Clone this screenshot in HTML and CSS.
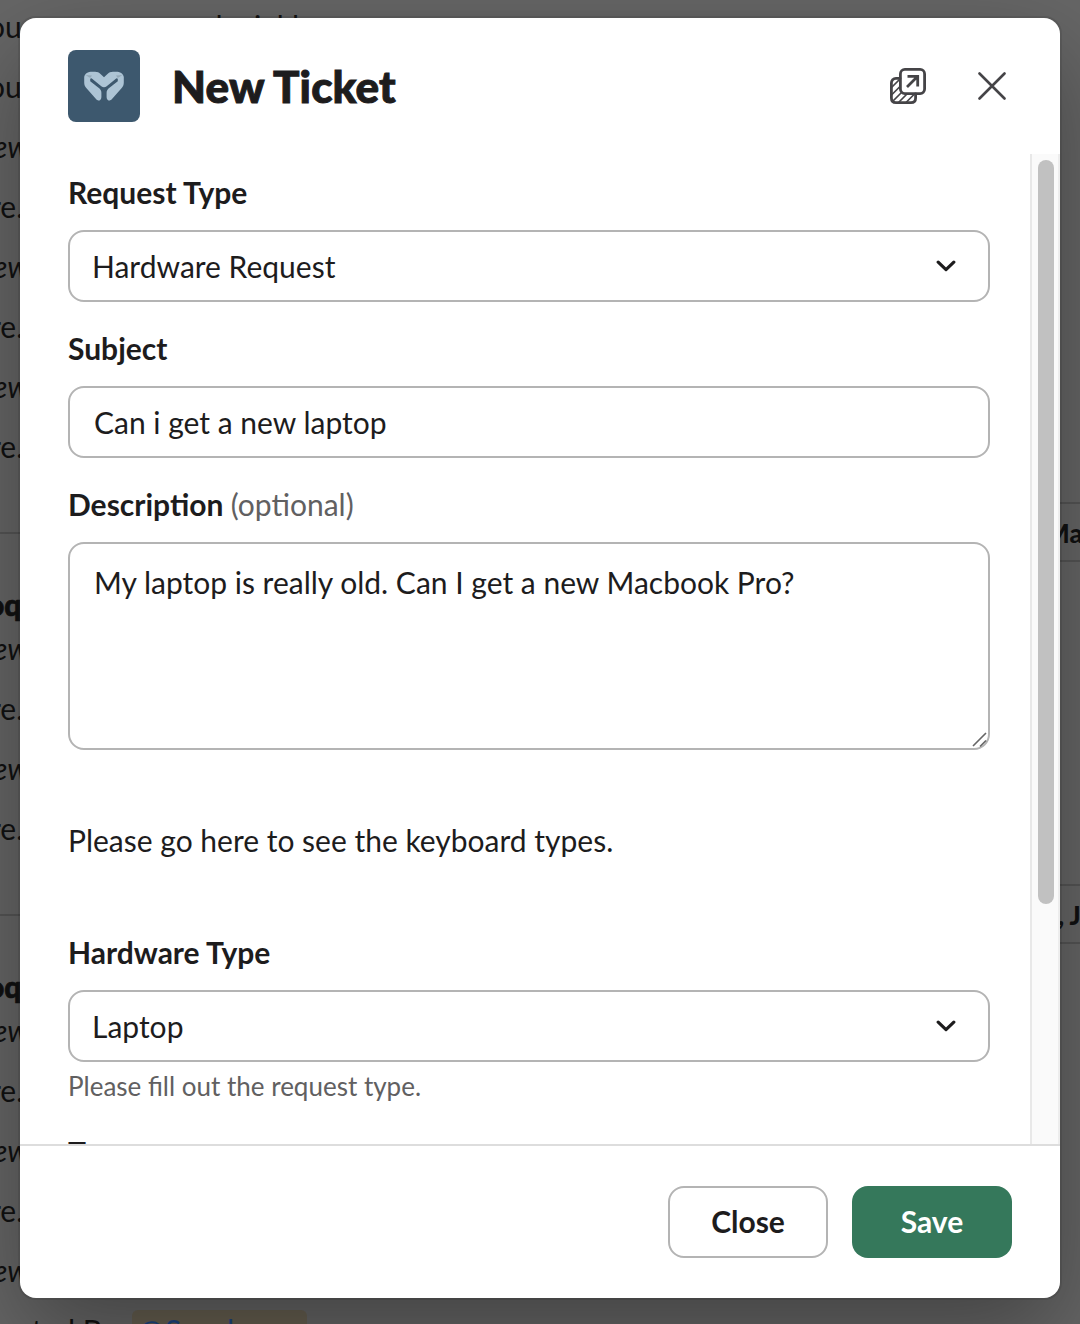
FILE: index.html
```html
<!DOCTYPE html>
<html lang="en">
<head>
    <meta charset="UTF-8">
    <meta name="viewport" content="width=device-width, initial-scale=1">
    <link rel="stylesheet" href="styles.css">
    <title>New Ticket</title>
</head>

<body>
<div class="channel">
    <div class="message">
        <p class="you">ou<span class="rest">d &nbsp;i kl</span></p>
        <p class="you">ou</p>
        <p class="view">ew</p>
        <p class="created">re.</p>
        <p class="view">ew</p>
        <p class="created">re.</p>
        <p class="view">ew</p>
        <p class="created">re.</p>
        <div class="assignee">Ma</div>
    </div>
    <div class="message">
        <h2>oq</h2>
        <p class="view">ew</p>
        <p class="created">re.</p>
        <p class="view">ew</p>
        <p class="created">re.</p>
        <div class="assignee second">, J</div>
    </div>
    <div class="message">
        <h2>oq</h2>
        <p class="view">ew</p>
        <p class="created">re.</p>
        <p class="view">ew</p>
        <p class="created">re.</p>
        <p class="view">ew</p>
        <p class="by">ated By: <span class="mention">@Sandeep</span></p>
    </div>
</div>

<div class="modal">
    <div class="header">
        <svg class="logo" viewBox="0 0 72 72">
            <rect width="72" height="72" rx="8" fill="#3d586e"/>
            <path fill="#adc4d5" d="M16.200 27C16.800 23.500 20 21.700 24 21.700H27C29.500 21.700 31 22.500 32.500 24L36 27.300L39.500 24C41 22.500 42.500 21.700 45 21.700H48C52 21.700 55.200 23.500 55.800 27V32.500C55.800 35 55 36.500 53.500 38.300L44 49C42.700 50.500 41 51 39.800 50C38.900 49.200 38.600 48 38.600 46.500V43C38.600 41 39.300 39.800 40.500 38.600L49.800 31.200V28.800L48.500 28.300L38.700 36.300C37 37.600 35 37.600 33.300 36.300L23.500 28.300L22.200 28.800V31.200L31.500 38.600C32.700 39.800 33.400 41 33.400 43V46.500C33.400 48 33.100 49.200 32.200 50C31 51 29.300 50.500 28 49L18.500 38.300C17 36.500 16.200 35 16.200 32.500Z"/>
            <path fill="#94a9b8" d="M17.500 25L24 25.500L22.200 28ZM54.500 25L48 25.500L49.800 28Z"/>
        </svg>
        <h1>New Ticket</h1>
        <svg class="popout" viewBox="0 0 36 36" fill="none" stroke="#454447" stroke-width="2.800" stroke-linecap="round" stroke-linejoin="round">
            <rect x="10.400" y="1.400" width="24.200" height="24.200" rx="4.500"/>
            <path d="M10 10.400H6C3.200 10.400 1.400 12.200 1.400 15V30C1.400 32.800 3.200 34.600 6 34.600H21C23.800 34.600 25.600 32.800 25.600 30V26"/>
            <path stroke-width="1.700" d="M2 19L9.500 11.500M2 26.500L10 18.500M3.500 32.500L11 25M9 34L16.500 26.500M16.500 34L24 26.500"/>
            <path stroke-width="2.800" stroke-linecap="butt" stroke-linejoin="miter" d="M17.500 8.300H27.700V18.500M27.500 8.500L17 19"/>
        </svg>
        <svg class="close" viewBox="0 0 28 28" fill="none" stroke="#454447" stroke-width="2.600" stroke-linecap="round">
            <path d="M1.500 1.500L26.500 26.500M26.500 1.500L1.500 26.500"/>
        </svg>
    </div>

    <div class="content">
        <form class="fields" action="javascript:void(0);">
            <div class="field">
                <label>Request Type</label>
                <div class="box select">
                    Hardware Request
                    <svg viewBox="0 0 20 12"><path d="M2.200 2.200L10 9.600L17.800 2.200"/></svg>
                </div>
            </div>
            <div class="field">
                <label for="subject">Subject</label>
                <input class="box" id="subject" type="text" value="Can i get a new laptop">
            </div>
            <div class="field area">
                <label for="description">Description <span class="optional">(optional)</span></label>
                <textarea class="box" id="description">My laptop is really old. Can I get a new Macbook Pro?</textarea>
                <svg class="grip" viewBox="0 0 16 16"><path d="M1 14L14 1M8 14.500L14 8.500"/></svg>
            </div>
            <p class="note">Please go here to see the keyboard types.</p>
            <div class="field">
                <label>Hardware Type</label>
                <div class="box select">
                    Laptop
                    <svg viewBox="0 0 20 12"><path d="M2.200 2.200L10 9.600L17.800 2.200"/></svg>
                </div>
                <div class="hint">Please fill out the request type.</div>
            </div>
            <div class="field">
                <label>T</label>
            </div>
        </form>
        <div class="track">
            <div class="thumb"></div>
        </div>
    </div>

    <div class="footer">
        <button>Close</button>
        <button class="savebtn">Save</button>
    </div>
</div>
</body>
</html>
```
FILE: styles.css
```css
* {
    box-sizing: border-box;
}

body {
    margin: 0;
    height: 1324px;
    overflow: hidden;
    position: relative;
    background: #666;
    color: #1d1c1d;
    font: 30px/44px Lato, sans-serif;
}

h1, h2, p {
    margin: 0;
}

/* conversation behind the dialog */
.channel {
    height: 1328px;
    margin-top: -4px;
    overflow: hidden;
    color: #111;
    white-space: nowrap;
}

.message {
    position: relative;
    padding-bottom: 56px;
}

.message + .message {
    border-top: 2px solid #555;
    padding-top: 56px;
}

.message h2 {
    font-size: 30px;
    font-weight: 900;
    line-height: 28px;
    margin-left: -13px;
    -webkit-text-stroke: 0.7px #111;
}

.message p {
    line-height: 60px;
}

.you {
    margin-left: -12px;
}

.rest {
    margin-left: 184px;
    word-spacing: 8px;
}

.message .view {
    margin-left: -7px;
    font-style: italic;
}

.created {
    margin-left: -10px;
}

.by {
    margin-left: 17px;
}

.mention {
    padding: 2px 18px 2px 6px;
    border-radius: 6px;
    background: #665f50;
    color: #1d4580;
    letter-spacing: 1.5px;
}

.assignee {
    position: absolute;
    z-index: 1;
    right: 0;
    top: 506px;
    width: 200px;
    height: 60px;
    padding-left: 163px;
    border: 2px solid #555;
    border-right: 0;
    background: #666;
    font-size: 26px;
    font-weight: 900;
    line-height: 58px;
}

.assignee.second {
    top: 350px;
    padding-left: 176px;
}

/* dialog */
.modal {
    position: absolute;
    z-index: 2;
    left: 20px;
    top: 18px;
    width: 1040px;
    height: 1280px;
    display: flex;
    flex-direction: column;
    border-radius: 16px;
    background: #fff;
    box-shadow: 0 0 0 2px rgba(29, 28, 29, 0.13), 0 36px 96px rgba(0, 0, 0, 0.35);
}

.header {
    height: 136px;
    display: flex;
    align-items: center;
    padding: 0 54px 0 48px;
}

.logo {
    width: 72px;
    height: 72px;
}

.header h1 {
    flex: 1;
    margin-left: 32px;
    font-size: 44px;
    font-weight: 900;
    letter-spacing: 0.15px;
    -webkit-text-stroke: 1px #1d1c1d;
}

.popout {
    width: 36px;
    height: 36px;
    margin-right: 52px;
}

.close {
    width: 28px;
    height: 28px;
}

.content {
    height: 990px;
    display: flex;
    overflow: hidden;
}

.fields {
    flex: 1;
    padding: 16px 40px 0 48px;
}

.field {
    margin-bottom: 24px;
}

.field label {
    display: block;
    margin-bottom: 16px;
    font-weight: bold;
}

.optional {
    color: #616061;
    font-weight: normal;
}

.box {
    display: block;
    width: 100%;
    height: 72px;
    padding: 0 24px;
    border: 2px solid #b4b4b4;
    border-radius: 16px;
    background: #fff;
    color: #1d1c1d;
    font: 30px/44px Lato, sans-serif;
}

.select {
    display: flex;
    align-items: center;
    justify-content: space-between;
    padding: 0 32px 0 22px;
}

.select svg {
    width: 20px;
    height: 12px;
    fill: none;
    stroke: #1d1c1d;
    stroke-width: 3.2;
    stroke-linecap: round;
    stroke-linejoin: round;
}

.area {
    position: relative;
}

textarea.box {
    height: 208px;
    padding: 16px 24px;
    resize: none;
    overflow: hidden;
}

.grip {
    position: absolute;
    right: 2px;
    bottom: 2px;
    width: 16px;
    height: 16px;
    fill: none;
    stroke: #666;
    stroke-width: 1.6;
}

.note {
    margin: 68px 0;
}

.hint {
    margin-top: 4px;
    color: #616061;
    font-size: 26px;
    line-height: 40px;
}

.track {
    width: 30px;
    padding: 6px 4px 0 6px;
    border-left: 2px solid #e8e8e8;
    border-right: 2px solid #ededed;
    background: #fafafa;
}

.thumb {
    width: 16px;
    height: 744px;
    border-radius: 8px;
    background: #c1c1c1;
}

.footer {
    flex: 1;
    display: flex;
    justify-content: flex-end;
    gap: 24px;
    padding: 40px 48px 0;
    border-top: 2px solid #ddd;
}

.footer button {
    width: 160px;
    height: 72px;
    padding: 0 0 2px;
    border: 2px solid #b4b4b4;
    border-radius: 16px;
    background: #fff;
    color: #1d1c1d;
    font: bold 30px Lato, sans-serif;
}

.footer .savebtn {
    border: 0;
    background: #35785b;
    color: #fff;
}
```
